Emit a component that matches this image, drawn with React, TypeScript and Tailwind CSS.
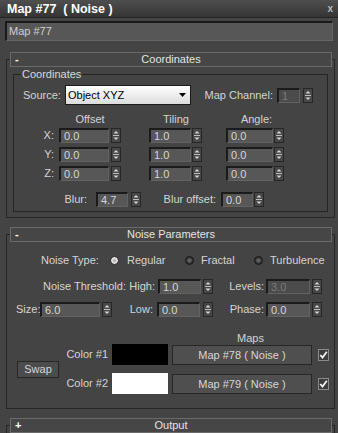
import React from 'react';

const Spin = () => (
  <svg width="10" height="15" className="block shrink-0">
    <rect x="0.5" y="0.5" width="9" height="14" fill="#474747" stroke="#262626" />
    <path d="M2.5 5.5 L5 3 L7.5 5.5 Z" fill="#d6d6d6" />
    <line x1="2" y1="7.5" x2="8" y2="7.5" stroke="#bdbdbd" />
    <path d="M2.5 9.5 L7.5 9.5 L5 12 Z" fill="#d6d6d6" />
  </svg>
);

const Field = ({ className = '', value, dim = false }: { className?: string; value: string; dim?: boolean }) => (
  <div
    className={`h-[15px] shrink-0 border-t-2 border-l-2 border-r border-b border-t-[#1b1b1b] border-l-[#1b1b1b] border-r-[#626262] border-b-[#626262] pl-[3px] text-[11px] leading-[12px] ${
      dim ? 'bg-[#4b4b4b] text-[#7c7c7c]' : 'bg-[#575757] text-[#d6d6d6]'
    } ${className}`}
  >
    {value}
  </div>
);

const Radio = ({ on = false }: { on?: boolean }) => (
  <svg width="9" height="9" className="block shrink-0">
    <circle cx="4.5" cy="4.5" r="4" fill={on ? '#e8e8e8' : '#2e2e2e'} stroke="#1c1c1c" />
    <circle cx="4.5" cy="4.5" r={on ? 2 : 2.3} fill={on ? '#3a3a3a' : '#5e5e5e'} opacity={on ? 0.25 : 1} />
  </svg>
);

const Check = () => (
  <svg width="11" height="12" className="block shrink-0">
    <rect x="0.5" y="0.5" width="10" height="11" fill="#3c3c3c" stroke="#8a8a8a" />
    <path d="M2.3 6 L4.5 8.6 L8.8 2.8" fill="none" stroke="#f2f2f2" strokeWidth="1.8" />
  </svg>
);

const Rollout = ({ title, sign, className = '', children }: { title: string; sign: string; className?: string; children?: React.ReactNode }) => (
  <div className={`ml-[6px] mr-[3px] border border-[#262626] ${className}`}>
    <div className="-mt-[8px] ml-[3px] mr-[2px] h-[15px] border border-[#6a6a6a] bg-[#464646] flex items-center text-[11px] text-[#e4e4e4]">
      <span className="w-[18px] pl-[4px] font-bold text-white leading-[13px]">{sign}</span>
      <span className="flex-1 text-center leading-[13px]">{title}</span>
      <span className="w-[18px]" />
    </div>
    {children}
  </div>
);

export default function App() {
  return (
    <div className="w-[338px] h-[433px] overflow-hidden bg-[#444444] font-['Liberation_Sans',Arial,sans-serif] text-[11px] text-[#d4d4d4]">
      {/* title bar */}
      <div className="h-[18px] flex items-center justify-between pl-[7px] pr-[5px] bg-gradient-to-b from-[#4e4e4e] to-[#353535] border-b border-[#242424]">
        <span className="text-[12.5px] font-bold text-white whitespace-pre leading-[16px]">Map #77  ( Noise )</span>
        <span className="text-[10px] font-bold text-[#b8b8b8] leading-[16px]">x</span>
      </div>

      {/* name */}
      <div className="mt-[3px] mx-[5px] h-[20px] border-t-2 border-l-2 border-r border-b border-t-[#1a1a1a] border-l-[#1a1a1a] border-r-[#666] border-b-[#666] bg-[#575757] pl-[2px] text-[11px] leading-[17px] text-[#d0d0d0]">
        Map #77
      </div>

      {/* Coordinates rollout */}
      <Rollout title="Coordinates" sign="-" className="mt-[18px]">
        <div className="mt-[7px] ml-[6px] mr-[6px] mb-[5px] border border-[#242424] pb-[4px]">
          <div className="-mt-[7px] ml-[7px] w-fit px-[1px] bg-[#444444] leading-[13px] text-[#d8d8d8]">Coordinates</div>

          {/* Source row */}
          <div className="mt-[4px] h-[20px] flex items-center">
            <span className="w-[51px] pl-[9px]">Source:</span>
            <div className="w-[126px] h-[20px] shrink-0 border border-[#1a1a1a] bg-gradient-to-b from-[#ffffff] to-[#dcdcdc] flex items-center justify-between pl-[2px] pr-[4px] text-black leading-[18px]">
              <span>Object XYZ</span>
              <svg width="7" height="4" className="block">
                <path d="M0 0 L7 0 L3.5 4 Z" fill="#000" />
              </svg>
            </div>
            <span className="w-[86px] text-right pr-[4px] shrink-0">Map Channel:</span>
            <Field className="w-[23px]" value="1" dim />
            <div className="ml-[3px]"><Spin /></div>
          </div>

          {/* column headers */}
          <div className="mt-[8px] h-[13px] flex leading-[13px]">
            <span className="ml-[45px] w-[62px] text-center">Offset</span>
            <span className="ml-[28px] w-[54px] text-center">Tiling</span>
            <span className="ml-[24px] w-[59px] text-center">Angle:</span>
          </div>

          {[
            ['X:', '0.0', '1.0', '0.0'],
            ['Y:', '0.0', '1.0', '0.0'],
            ['Z:', '0.0', '1.0', '0.0'],
          ].map(([l, a, b, c], i) => (
            <div key={l} className={`${i === 0 ? 'mt-[2px]' : 'mt-[4px]'} h-[15px] flex items-center`}>
              <span className="w-[45px] text-right pr-[5px] shrink-0">{l}</span>
              <Field className="w-[50px]" value={a} />
              <div className="ml-[2px]"><Spin /></div>
              <Field className="w-[42px] ml-[28px]" value={b} />
              <div className="ml-[1px]"><Spin /></div>
              <Field className="w-[47px] ml-[24px]" value={c} />
              <div className="ml-[1px]"><Spin /></div>
            </div>
          ))}

          {/* blur row */}
          <div className="mt-[11px] h-[15px] flex items-center">
            <span className="w-[82px] text-right pr-[9px] shrink-0">Blur:</span>
            <Field className="w-[32px]" value="4.7" />
            <div className="ml-[3px]"><Spin /></div>
            <span className="w-[80px] text-right pr-[5px] shrink-0">Blur offset:</span>
            <Field className="w-[32px]" value="0.0" />
            <div className="ml-[1px]"><Spin /></div>
          </div>
        </div>
      </Rollout>

      {/* Noise Parameters rollout */}
      <Rollout title="Noise Parameters" sign="-" className="mt-[16px]">
        {/* noise type */}
        <div className="mt-[11px] h-[15px] flex items-center">
          <span className="ml-[34px] w-[69px] shrink-0">Noise Type:</span>
          <Radio on />
          <span className="ml-[8px] w-[58px] shrink-0">Regular</span>
          <Radio />
          <span className="ml-[7px] w-[53px] shrink-0">Fractal</span>
          <Radio />
          <span className="ml-[7px]">Turbulence</span>
        </div>

        {/* threshold */}
        <div className="mt-[11px] h-[15px] flex items-center">
          <span className="ml-[36px] w-[84px] shrink-0">Noise Threshold:</span>
          <span className="w-[31px] text-right pr-[3px] shrink-0">High:</span>
          <Field className="w-[43px]" value="1.0" />
          <div className="ml-[2px]"><Spin /></div>
          <span className="w-[53px] text-right pr-[2px] shrink-0">Levels:</span>
          <Field className="w-[44px]" value="3.0" dim />
          <div className="ml-[2px]"><Spin /></div>
        </div>

        {/* size row */}
        <div className="mt-[8px] h-[15px] flex items-center">
          <span className="ml-[9px] w-[24px] shrink-0">Size:</span>
          <Field className="w-[60px]" value="6.0" />
          <div className="ml-[2px]"><Spin /></div>
          <span className="w-[45px] text-right pr-[4px] shrink-0">Low:</span>
          <Field className="w-[43px]" value="0.0" />
          <div className="ml-[3px]"><Spin /></div>
          <span className="w-[53px] text-right pr-[2px] shrink-0">Phase:</span>
          <Field className="w-[44px]" value="0.0" />
          <div className="ml-[2px]"><Spin /></div>
        </div>

        <div className="mt-[15px] h-[12px] leading-[12px] pl-[230px]">Maps</div>

        {/* colors + maps */}
        <div className="h-[50px] mb-[14px] flex items-center pl-[10px]">
          <button className="w-[42px] h-[17px] shrink-0 border border-[#262626] bg-[#4c4c4c] text-[#d6d6d6] text-[11px] leading-[15px]">Swap</button>
          <div className="flex flex-col gap-[8px]">
            {[
              ['Color #1', 'bg-black', 'Map #78 ( Noise )'],
              ['Color #2', 'bg-white', 'Map #79 ( Noise )'],
            ].map(([label, sw, map]) => (
              <div key={label} className="h-[21px] flex items-center">
                <span className="w-[53px] text-right pr-[4px] shrink-0 whitespace-pre">{label.replace('#', ' #').replace('  ', ' ')}</span>
                <div className={`w-[56px] h-[21px] shrink-0 ${sw}`} />
                <div className="ml-[4px] w-[140px] h-[20px] shrink-0 border border-[#262626] bg-[#4f4f4f] text-center leading-[18px] text-[#d6d6d6]">{map}</div>
                <div className="ml-[6px]"><Check /></div>
              </div>
            ))}
          </div>
        </div>
      </Rollout>

      {/* Output rollout */}
      <Rollout title="Output" sign="+" className="mt-[16px] h-[20px]" />
    </div>
  );
}
